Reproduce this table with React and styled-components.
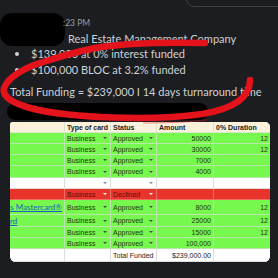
import React from 'react'
import styled, { createGlobalStyle } from 'styled-components'

const GlobalStyle = createGlobalStyle`
    html, body {
        margin: 0;
        padding: 0;
        background: #1b1d21;
    }
`

const Page = styled('div')`
    position: relative;
    width: 278px;
    height: 278px;
    overflow: hidden;
    background: #1b1d21;
    font-family: Lato, 'Liberation Sans', sans-serif;
    color: #d1d2d3;
`

const TopBar = styled('div')`
    display: flex;
    justify-content: flex-end;
    height: 6px;
`

const Composer = styled('div')`
    width: 100px;
    height: 20px;
    margin-top: -15px;
    margin-right: -10px;
    border: 1px solid #414246;
    border-radius: 8px;
`

const Content = styled('div')`
    padding-left: 10px;
`

const HeaderRow = styled('div')`
    display: flex;
    align-items: flex-start;
    margin-top: 7px;
`

const Redacted = styled('div')`
    background: #000;
    width: ${p => p.$w}px;
    height: ${p => p.$h}px;
    margin-left: ${p => p.$ml || 0}px;
    margin-top: ${p => p.$mt || 0}px;
    border-radius: ${p => p.$r}px;
    flex-shrink: 0;
`

const Meta = styled('div')`
    display: flex;
    flex-direction: column;
    margin-left: -2px;
    padding-top: 2px;
`

const Time = styled('div')`
    font-size: 8.5px;
    line-height: 16px;
    color: #9c9da0;
`

const Company = styled('div')`
    font-size: 11px;
    line-height: 15px;
    margin-left: 5px;
    white-space: nowrap;
`

const List = styled('div')`
    display: flex;
    flex-direction: column;
`

const Bullet = styled('div')`
    display: flex;
    align-items: center;
    font-size: 11px;
    line-height: 16px;
    white-space: nowrap;

    &::before {
        content: '';
        width: 4px;
        height: 4px;
        border-radius: 50%;
        background: #d1d2d3;
        margin: 0 12px 0 5px;
    }
`

const Total = styled('div')`
    font-size: 11px;
    line-height: 16px;
    margin-top: 6px;
    white-space: nowrap;
`

const Sheet = styled('div')`
    margin-top: 2px;
    width: 260px;
    background: #fff;
    border-radius: 3px 5px 6px 6px;
    overflow: hidden;
    font-family: 'Liberation Sans', Arial, sans-serif;
    font-size: 7px;
`

const Row = styled('div')`
    display: grid;
    grid-template-columns: 55px 46px 46px 57px 56px;
    height: ${p => p.$h || 11}px;
    background: ${p => p.$bg || '#fff'};
    color: ${p => p.$fg || '#1d3512'};
`

const Cell = styled('div')`
    display: flex;
    align-items: center;
    justify-content: ${p => (p.$right ? 'flex-end' : 'space-between')};
    padding: 0 ${p => (p.$right ? 2 : 3)}px 0 2px;
    border-right: 1px solid ${p => p.$line || 'rgba(205, 225, 200, 0.75)'};
    border-bottom: 1px solid ${p => p.$line || 'rgba(205, 225, 200, 0.75)'};
    font-weight: ${p => (p.$bold ? 700 : 400)};
    white-space: nowrap;
    overflow: hidden;
    box-sizing: border-box;

    &:last-child {
        border-right: none;
    }
`

const Arrow = styled('span')`
    width: 0;
    height: 0;
    border-left: 2px solid transparent;
    border-right: 2px solid transparent;
    border-top: 2px solid ${p => p.$c || '#4a4a4a'};
    margin-left: auto;
`

const LinkCell = styled(Cell)`
    justify-content: ${p => (p.$end ? 'flex-end' : 'flex-start')};
    padding: 0 2px 0 0;
`

const Link = styled('span')`
    color: #1a62c4;
    text-decoration: underline;
    font-family: Lato, 'Liberation Sans', sans-serif;
    font-size: 8px;
`

const Marker = styled('svg')`
    position: absolute;
    left: 0;
    top: 0;
    pointer-events: none;
`

const GREEN = '#77f84e'
const RED = '#e8342b'
const RED_LINE = 'rgba(240, 150, 140, 0.6)'
const GREY_LINE = '#dcdcdc'

const cards = [
    { amount: '50000', dur: '12' },
    { amount: '30000', dur: '12' },
    { amount: '7000' },
    { amount: '4000', h: 12 },
]

const later = [
    { amount: '8000', dur: '12', h: 15, link: 's Mastercard®', end: true },
    { amount: '25000', dur: '12', h: 12, link: 'rd' },
    { amount: '15000', dur: '12' },
    { amount: '100,000' },
]

const DataRow = ({ r }) => (
    <Row $bg={GREEN} $h={r.h}>
        {r.link ? (
            <LinkCell $end={r.end}>
                <Link>{r.link}</Link>
            </LinkCell>
        ) : (
            <Cell />
        )}
        <Cell>Business<Arrow /></Cell>
        <Cell>Approved<Arrow /></Cell>
        <Cell $right>{r.amount}</Cell>
        <Cell $right>{r.dur}</Cell>
    </Row>
)

const App = () => {
    return (
        <Page>
            <GlobalStyle />
            <TopBar>
                <Composer />
            </TopBar>
            <Content>
                <HeaderRow>
                    <Redacted $w={65} $h={33} $ml={-10} $r={12} />
                    <Meta>
                        <Time>:23 PM</Time>
                        <Company>Real Estate Management Company</Company>
                    </Meta>
                </HeaderRow>
                <List>
                    <Bullet>$139,000 at 0% interest funded</Bullet>
                    <Bullet>$100,000 BLOC at 3.2% funded</Bullet>
                </List>
                <Total>Total Funding = $239,000 I 14 days turnaround time</Total>
                <Redacted $w={201} $h={17} $ml={-3} $mt={3} $r={9} />
                <Sheet>
                    <Row $bg="#fcf1da" $fg="#1b1b1b">
                        <Cell />
                        <Cell $bold>Type of card</Cell>
                        <Cell $bold>Status</Cell>
                        <Cell $bold>Amount</Cell>
                        <Cell $bold>0% Duration</Cell>
                    </Row>
                    {cards.map((r, i) => <DataRow key={i} r={r} />)}
                    <Row>
                        <Cell $line={GREY_LINE} />
                        <Cell $line={GREY_LINE}><Arrow $c="#888" /></Cell>
                        <Cell $line={GREY_LINE}><Arrow $c="#888" /></Cell>
                        <Cell $line={GREY_LINE} />
                        <Cell $line={GREY_LINE} />
                    </Row>
                    <Row $bg={RED} $fg="#5c0e0a">
                        <Cell $line={RED_LINE} />
                        <Cell $line={RED_LINE}>Business<Arrow $c="#fff" /></Cell>
                        <Cell $line={RED_LINE}>Declined<Arrow $c="#fff" /></Cell>
                        <Cell $line={RED_LINE} />
                        <Cell $line={RED_LINE} />
                    </Row>
                    {later.map((r, i) => <DataRow key={i} r={r} />)}
                    <Row $h={13} $fg="#222">
                        <Cell $line={GREY_LINE} />
                        <Cell $line={GREY_LINE} />
                        <Cell $line={GREY_LINE}>Total Funded</Cell>
                        <Cell $line={GREY_LINE} $right>$239,000.00</Cell>
                        <Cell $line={GREY_LINE} />
                    </Row>
                </Sheet>
            </Content>
            <Marker width="278" height="278" viewBox="0 0 278 278">
                <path
                    d="M 250 80 C 250 99 232 109 202 114 C 152 121 72 118 34 109 C 10 103 0 95 5 86 C 10 76 22 70 34 65 C 55 58 75 52 95 48 C 125 43 160 42 205 43"
                    fill="none"
                    stroke="#e3121b"
                    strokeWidth="6.5"
                    strokeLinecap="round"
                />
                <path
                    d="M 143 123 C 170 123 190 122 207 120"
                    fill="none"
                    stroke="#e3121b"
                    strokeWidth="1"
                    strokeOpacity="0.5"
                />
            </Marker>
        </Page>
    )
}

export default App
